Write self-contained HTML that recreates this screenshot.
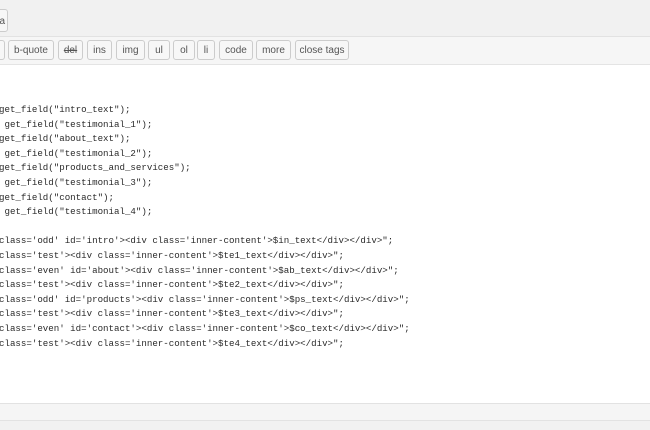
<!DOCTYPE html>
<html><head><style>
*{margin:0;padding:0;box-sizing:border-box}
body{width:650px;height:430px;overflow:hidden;background:#f1f1f1;position:relative;font-family:"Liberation Sans",sans-serif}
.top{position:absolute;left:0;top:0;width:650px;height:37px;background:#f1f1f1;border-bottom:1px solid #e2e2e2}
.tb{position:absolute;left:0;top:37px;width:650px;height:28px;background:#f6f6f6;border-bottom:1px solid #e4e4e4}
.btn{position:absolute;height:20px;top:40px;border:1px solid #ccc;border-radius:3px;background:#f7f7f7;color:#555;font-size:10px;line-height:20px;text-align:center}
.ed{position:absolute;left:0;top:65px;width:650px;height:338px;background:#fff}
pre{position:absolute;left:-1px;top:103px;font-family:"Liberation Mono",monospace;font-size:9.15px;line-height:14.6px;color:#2a2a2a}
.ft{position:absolute;left:0;top:403px;width:650px;height:18px;background:#f5f5f5;border-top:1px solid #e2e2e2;border-bottom:1px solid #e2e2e2}
</style></head><body>
<div class="top"></div>
<div class="btn" style="left:-10px;top:9px;width:18px;height:23px;line-height:23px;text-align:right;padding-right:2px">a</div>
<div class="tb"></div>
<div class="btn" style="left:-10px;width:15px"></div>
<div class="btn" style="left:8px;width:46px">b-quote</div>
<div class="btn" style="left:58px;width:25px;text-decoration:line-through">del</div>
<div class="btn" style="left:87px;width:25px">ins</div>
<div class="btn" style="left:116px;width:29px">img</div>
<div class="btn" style="left:148px;width:22px">ul</div>
<div class="btn" style="left:173px;width:22px">ol</div>
<div class="btn" style="left:197px;width:18px">li</div>
<div class="btn" style="left:219px;width:34px">code</div>
<div class="btn" style="left:256px;width:35px">more</div>
<div class="btn" style="left:295px;width:54px">close tags</div>
<div class="ed"></div>
<pre>get_field("intro_text");
 get_field("testimonial_1");
get_field("about_text");
 get_field("testimonial_2");
get_field("products_and_services");
 get_field("testimonial_3");
get_field("contact");
 get_field("testimonial_4");

class='odd' id='intro'>&lt;div class='inner-content'>$in_text&lt;/div>&lt;/div>";
class='test'>&lt;div class='inner-content'>$te1_text&lt;/div>&lt;/div>";
class='even' id='about'>&lt;div class='inner-content'>$ab_text&lt;/div>&lt;/div>";
class='test'>&lt;div class='inner-content'>$te2_text&lt;/div>&lt;/div>";
class='odd' id='products'>&lt;div class='inner-content'>$ps_text&lt;/div>&lt;/div>";
class='test'>&lt;div class='inner-content'>$te3_text&lt;/div>&lt;/div>";
class='even' id='contact'>&lt;div class='inner-content'>$co_text&lt;/div>&lt;/div>";
class='test'>&lt;div class='inner-content'>$te4_text&lt;/div>&lt;/div>";</pre>
<div class="ft"></div>
</body></html>
